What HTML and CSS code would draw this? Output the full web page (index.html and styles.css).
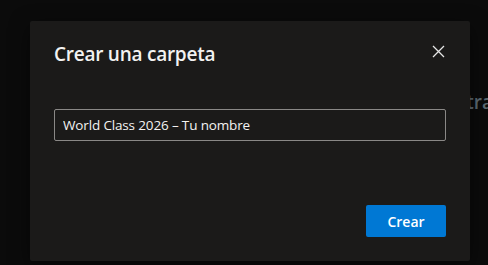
FILE: index.html
```html
<!DOCTYPE html>
<html lang="es">
<head>
<meta charset="utf-8">
<link rel="stylesheet" href="styles.css">
</head>
<body>
<div class="page">
  <div class="bg-text">Encuentra</div>
</div>
<div class="overlay">
  <div class="dialog" role="dialog">
    <div class="dialog-header">
      <h1 class="dialog-title">Crear una carpeta</h1>
      <button class="close-btn" aria-label="Cerrar">
        <svg width="13" height="13" viewBox="0 0 13 13"><path d="M1 1 L12 12 M12 1 L1 12" stroke="#e6e6e6" stroke-width="1.3" fill="none"/></svg>
      </button>
    </div>
    <input class="name-input" type="text" value="World Class 2026 – Tu nombre">
    <div class="dialog-footer">
      <button class="primary-btn">Crear</button>
    </div>
  </div>
</div>
</body>
</html>
```
FILE: styles.css
```css
html, body {
  margin: 0;
  padding: 0;
  width: 488px;
  height: 265px;
  overflow: hidden;
  background: #0b0b0b;
  font-family: "Open Sans", "Noto Sans", sans-serif;
}
.page {
  height: 265px;
  padding-top: 88px;
  box-sizing: border-box;
  overflow: hidden;
}
.bg-text {
  text-align: right;
  margin-right: -5px;
  font-size: 19px;
  line-height: 28px;
  color: #5d6a73;
  font-weight: 600;
  white-space: nowrap;
}
.overlay {
  position: absolute;
  left: 30px;
  top: 21px;
}
.dialog {
  width: 440px;
  height: 240px;
  box-sizing: border-box;
  background: #1b1a19;
  border-radius: 2px;
  box-shadow: 0 6px 20px rgba(0,0,0,0.5);
  padding: 16px 24px 24px 24px;
  display: flex;
  flex-direction: column;
}
.dialog-header {
  display: flex;
  align-items: flex-start;
  justify-content: space-between;
}
.dialog-title {
  margin: 0;
  padding-top: 3px;
  font-size: 19px;
  line-height: 28px;
  font-weight: 600;
  letter-spacing: -0.25px;
  color: #f3f2f1;
}
.close-btn {
  width: 16px;
  height: 16px;
  margin-top: 6px;
  padding: 0;
  border: none;
  background: transparent;
  display: flex;
  align-items: center;
  justify-content: center;
}
.name-input {
  margin-top: 41px;
  height: 32px;
  box-sizing: border-box;
  border: 1px solid #8a8886;
  border-radius: 2px;
  background: #1b1a19;
  color: #f3f2f1;
  font-family: inherit;
  font-size: 13.5px;
  letter-spacing: -0.15px;
  padding: 0 8px;
  outline: none;
}
.dialog-footer {
  margin-top: auto;
  display: flex;
  justify-content: flex-end;
}
.primary-btn {
  width: 80px;
  height: 32px;
  border: none;
  border-radius: 2px;
  background: #0078d4;
  color: #ffffff;
  font-family: inherit;
  font-size: 14px;
  font-weight: 600;
  padding: 0;
}
```
